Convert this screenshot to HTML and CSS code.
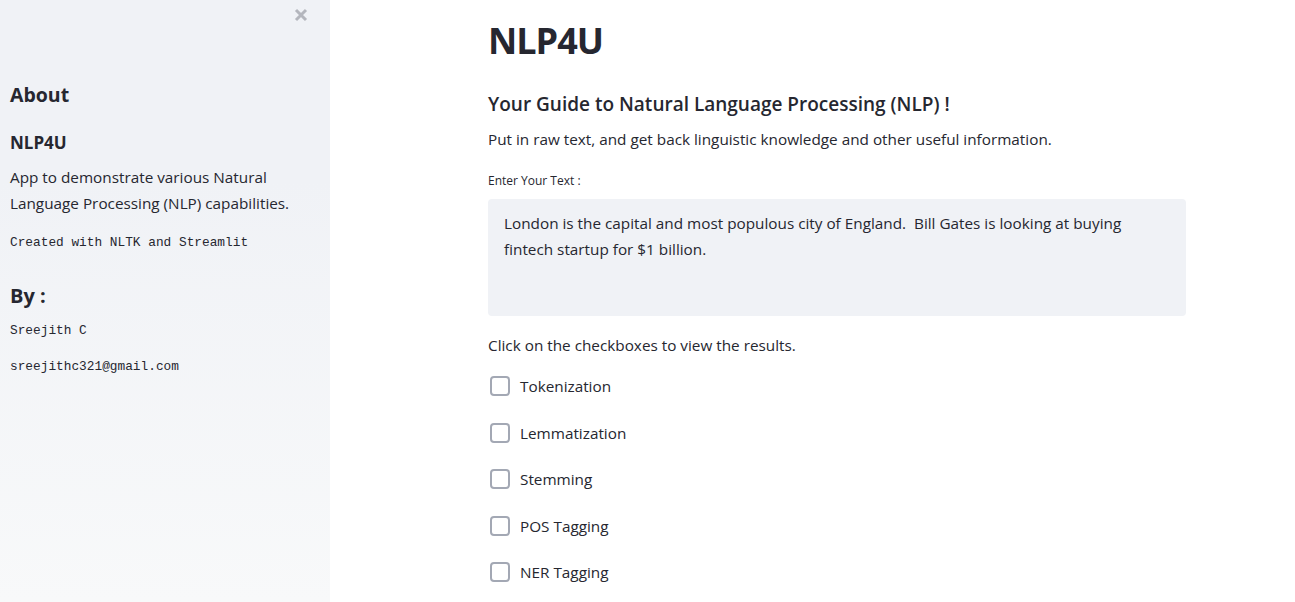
FILE: index.html
```html
<!DOCTYPE html>
<html lang="en">
<head>
<meta charset="utf-8">
<title>NLP4U</title>
<link rel="stylesheet" href="styles.css">
</head>
<body>
<div class="app">
  <aside class="sidebar">
    <div class="sidebar-top">
      <button class="close" aria-label="Close sidebar">
        <svg width="14" height="14" viewBox="0 0 14 14"><path d="M2 2 L12 12 M12 2 L2 12" stroke="#b4b6bd" stroke-width="3" stroke-linecap="butt"/></svg>
      </button>
    </div>
    <h2 class="side-h2">About</h2>
    <h3 class="side-h3">NLP4U</h3>
    <p class="side-p">App to demonstrate various Natural Language Processing (NLP) capabilities.</p>
    <p class="mono mono-created">Created with NLTK and Streamlit</p>
    <h2 class="side-by">By :</h2>
    <p class="mono mono-name">Sreejith C</p>
    <p class="mono mono-mail">sreejithc321@gmail.com</p>
  </aside>
  <main class="main">
    <div class="block">
      <h1 class="title">NLP4U</h1>
      <h3 class="subtitle">Your Guide to Natural Language Processing (NLP) !</h3>
      <p class="text intro">Put in raw text, and get back linguistic knowledge and other useful information.</p>
      <label class="label" for="txt">Enter Your Text :</label>
      <div class="textarea" id="txt">London is the capital and most populous city of England.&nbsp; Bill Gates is looking at buying fintech startup for $1 billion.</div>
      <p class="text click">Click on the checkboxes to view the results.</p>
      <div class="checks">
        <div class="check"><span class="box"></span><span>Tokenization</span></div>
        <div class="check"><span class="box"></span><span>Lemmatization</span></div>
        <div class="check"><span class="box"></span><span>Stemming</span></div>
        <div class="check"><span class="box"></span><span>POS Tagging</span></div>
        <div class="check"><span class="box"></span><span>NER Tagging</span></div>
      </div>
    </div>
  </main>
</div>
</body>
</html>
```

FILE: styles.css
```css
* { box-sizing: border-box; }
html, body { margin: 0; padding: 0; height: 100%; }
body {
  font-family: "Open Sans", "Noto Sans", sans-serif;
  color: #262730;
  background: #ffffff;
  overflow: hidden;
}
h1, h2, h3, p { margin: 0; }

.app { display: flex; height: 602px; }

.sidebar {
  width: 330px;
  flex: none;
  background: linear-gradient(180deg, #f0f2f6 0%, #f0f2f6 30%, #f8f9fa 100%);
  padding: 0 10px;
  display: flex;
  flex-direction: column;
}
.sidebar-top {
  display: flex;
  justify-content: flex-end;
  padding: 8px 12px 0 0;
  height: 80px;
}
.close {
  border: 0; background: none; padding: 0; width: 14px; height: 14px; cursor: pointer;
}
.side-h2 { font-size: 19.5px; font-weight: 700; line-height: 30px; }
.side-h3 { font-size: 17px; font-weight: 700; line-height: 26px; margin-top: 20px; }
.side-p { font-size: 15.3px; line-height: 26px; margin-top: 8px; }
.mono { font-family: "Liberation Mono", "DejaVu Sans Mono", monospace; font-size: 12.8px; line-height: 20px; }
.mono-created { margin-top: 17px; }
.side-by { font-size: 20px; font-weight: 700; line-height: 32px; margin-top: 27px; }
.mono-name { margin-top: 9px; }
.mono-mail { margin-top: 16px; }

.main { flex: 1; padding-left: 158px; }
.block { width: 698px; padding-top: 15px; }
.title { font-size: 36px; font-weight: 700; line-height: 52px; letter-spacing: -1px; }
.subtitle { font-size: 19px; font-weight: 600; line-height: 30px; margin-top: 22px; }
.text { font-size: 15.3px; line-height: 24px; }
.intro { margin-top: 8px; }
.label { display: block; font-size: 12px; line-height: 16px; margin-top: 22px; }
.textarea {
  margin-top: 10px;
  height: 117px;
  background: #f0f2f6;
  border-radius: 4px;
  padding: 11px 16px;
  font-size: 15.3px;
  line-height: 26px;
}
.click { margin-top: 17px; }
.checks { display: flex; flex-direction: column; gap: 22.5px; margin-top: 17px; }
.check { display: flex; align-items: center; height: 24px; font-size: 15.3px; }
.box {
  width: 20px; height: 20px;
  border: 2px solid #a3a8b4;
  border-radius: 4px;
  margin: 0 10px 0 2px;
  background: #fff;
}
```
